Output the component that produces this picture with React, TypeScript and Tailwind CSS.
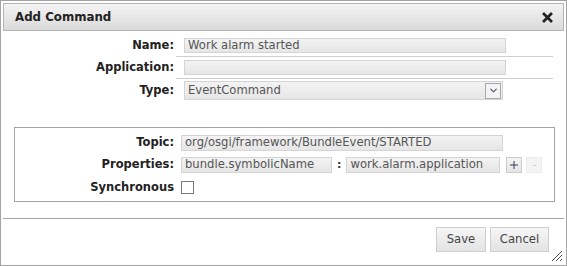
import { ChevronDown } from "lucide-react";

const font = { fontFamily: '"DejaVu Sans", Verdana, sans-serif' };

function TextBox({ value, width, height = "h-[16px]" }: { value: string; width: string; height?: string }) {
  return (
    <div
      className={`${width} ${height} border border-[#d4d4d4] bg-gradient-to-b from-[#f3f3f3] to-[#e6e6e6] px-[3px] text-[11.6px] leading-[13px] text-[#555] whitespace-nowrap overflow-hidden`}
    >
      {value}
    </div>
  );
}

function FormRow({
  label,
  divider,
  children,
}: {
  label: string;
  divider?: boolean;
  children: React.ReactNode;
}) {
  return (
    <div className="flex">
      <div className="w-[171px] flex items-center justify-end text-[11.5px] font-bold text-[#222]">
        {label}
      </div>
      <div
        className={`ml-[2px] w-[377px] pl-[8px] ${
          divider ? "py-[3px] border-b border-[#cfcfcf]" : "pt-[2px] pb-[3px]"
        }`}
      >
        {children}
      </div>
    </div>
  );
}

function FieldRow({ label, children }: { label: string; children: React.ReactNode }) {
  return (
    <div className="flex items-center">
      <div className="w-[159px] text-right text-[11.5px] font-bold text-[#222]">{label}</div>
      <div className="ml-[7px] flex items-center">{children}</div>
    </div>
  );
}

export default function App() {
  return (
    <div
      className="w-[567px] h-[266px] border border-[#a3a3a3] bg-white p-[2px] flex flex-col"
      style={font}
    >
      <div className="h-[28px] shrink-0 border border-[#b5b5b5] bg-gradient-to-b from-[#f4f4f4] to-[#dadada] flex items-center justify-between pt-[1px] pl-[11px] pr-[10px]">
        <span className="text-[11.8px] font-bold text-[#222]">Add Command</span>
        <svg width="11" height="11" viewBox="0 0 11 11">
          <path d="M2 2 L9 9 M9 2 L2 9" stroke="#222" strokeWidth="2.7" strokeLinecap="square" />
        </svg>
      </div>

      <div className="mt-[4px] flex flex-col">
        <FormRow label="Name:" divider>
          <TextBox value="Work alarm started" width="w-[322px]" height="h-[15px]" />
        </FormRow>
        <FormRow label="Application:" divider>
          <TextBox value="" width="w-[322px]" height="h-[15px]" />
        </FormRow>
        <FormRow label="Type:">
          <div className="w-[319px] h-[19px] border border-[#d4d4d4] bg-gradient-to-b from-[#f3f3f3] to-[#e6e6e6] flex items-center justify-between pl-[3px] pr-[1px] text-[11.6px] text-[#555]">
            <span>EventCommand</span>
            <div className="w-[16px] h-[16px] border border-[#a8a8a8] bg-[#f4f4f4] flex items-center justify-center">
              <ChevronDown size={11} strokeWidth={3} color="#5a6470" />
            </div>
          </div>
        </FormRow>
      </div>

      <div className="mt-[24px] ml-[11px] w-[541px] h-[75px] shrink-0 border border-[#a3a3a3] pt-[6px] flex flex-col gap-[5px]">
        <FieldRow label="Topic:">
          <TextBox value="org/osgi/framework/BundleEvent/STARTED" width="w-[322px]" />
        </FieldRow>
        <FieldRow label="Properties:">
          <TextBox value="bundle.symbolicName" width="w-[151px]" />
          <span className="mx-[5px] text-[11px] font-bold text-[#333]">:</span>
          <TextBox value="work.alarm.application" width="w-[154px]" />
          <div className="ml-[6px] w-[16px] h-[16px] border border-[#cccccc] bg-gradient-to-b from-[#f4f4f4] to-[#e4e4e4] flex items-center justify-center">
            <svg width="8" height="8" viewBox="0 0 8 8">
              <path d="M0 4 H8 M4 0 V8" stroke="#2a3f5a" strokeWidth="1" />
            </svg>
          </div>
          <div className="ml-[4px] w-[16px] h-[16px] border border-[#ececec] bg-[#f4f4f4] flex items-center justify-center text-[11px] leading-none text-[#c8c8c8]">
            -
          </div>
        </FieldRow>
        <FieldRow label="Synchronous">
          <div className="mt-[1px] w-[13px] h-[13px] border border-[#7a7a7a] bg-white" />
        </FieldRow>
      </div>

      <div className="mt-[16px] border-t border-[#a3a3a3] flex-1 relative flex justify-end items-start pt-[8px] pr-[15px] gap-[4px]">
        <button className="w-[50px] h-[25px] border border-[#cfcfcf] bg-gradient-to-b from-[#f6f6f6] to-[#e3e3e3] text-[11.6px] text-[#444]">
          Save
        </button>
        <button className="w-[59px] h-[25px] border border-[#cfcfcf] bg-gradient-to-b from-[#f6f6f6] to-[#e3e3e3] text-[11.6px] text-[#444]">
          Cancel
        </button>
        <svg className="absolute right-[1px] bottom-[1px]" width="12" height="12" viewBox="0 0 12 12">
          <path d="M11 1 L1 11 M11 5 L5 11 M11 9 L9 11" stroke="#555" strokeWidth="1" />
        </svg>
      </div>
    </div>
  );
}
